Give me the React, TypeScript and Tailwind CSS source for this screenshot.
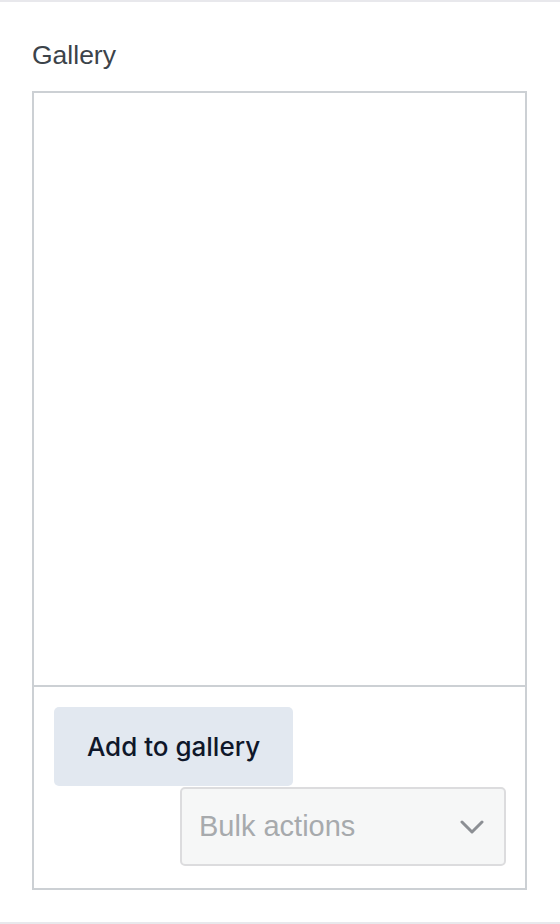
import React from 'react';

const Chevron = () => (
    <svg width="24" height="14" viewBox="0 0 24 14" fill="none">
        <path d="M2 2l10 10L22 2" stroke="#8c8f94" strokeWidth="3" strokeLinecap="round" strokeLinejoin="round" />
    </svg>
);

export default function App() {
    return (
        <div className="w-[560px] h-[924px] bg-white border-t-2 border-b-2 border-[#e8e8ec] pl-[32px] pr-[33px] pt-[38px]">
            {/* Field label */}
            <div className="text-[26.5px] leading-[30px] text-[#3c434a] font-['Liberation_Sans',Arial,sans-serif]">
                Gallery
            </div>

            {/* Gallery box */}
            <div className="mt-[21px] h-[799px] border-2 border-[#ccd0d4] flex flex-col">
                <div className="h-[594px] shrink-0 border-b-2 border-[#ccd0d4]"></div>
                <div className="flex-1 flex flex-col p-[20px] pr-[19px]">
                    <button className="self-start shrink-0 w-[239px] h-[79px] rounded-[5px] bg-[#e2e8f0] text-[#0f172a] text-[26px] font-medium font-['Inter',sans-serif]">
                        Add to gallery
                    </button>
                    <div className="self-end shrink-0 w-[326px] h-[79px] mt-[1px] rounded-[5px] border-2 border-[#dcdcde] bg-[#f6f7f7] flex items-center justify-between pl-[17px] pr-[20px]">
                        <span className="text-[29px] text-[#a7aaad] font-['Liberation_Sans',Arial,sans-serif]">
                            Bulk actions
                        </span>
                        <Chevron />
                    </div>
                </div>
            </div>
        </div>
    );
}
